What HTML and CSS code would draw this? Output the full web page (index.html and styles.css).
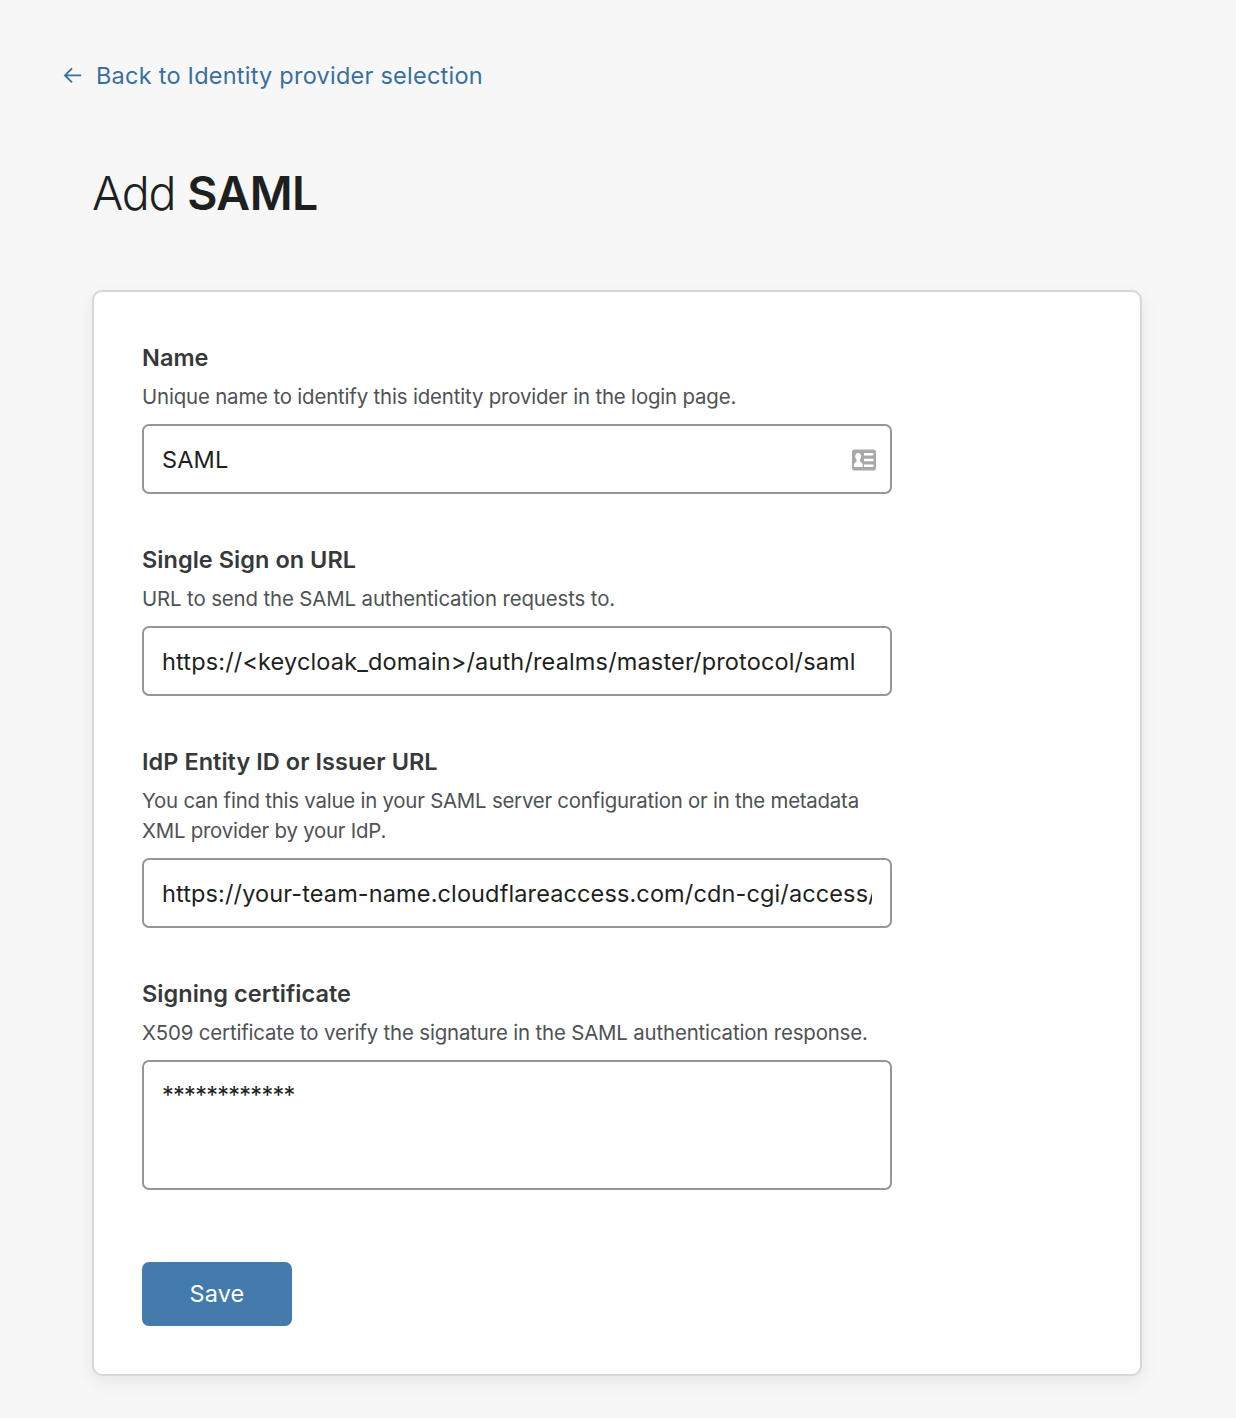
FILE: index.html
```html
<!DOCTYPE html>
<html lang="en">
<head>
<meta charset="utf-8">
<title>Add SAML</title>
<link rel="stylesheet" href="styles.css">
</head>
<body>
<main class="page">
  <a class="back" href="#">
    <svg class="back-icon" viewBox="0 0 20 18" fill="none" stroke="currentColor" stroke-width="1.9"><path d="M18.2 9.4H2.2M9 2.4 2 9.4l7 7"/></svg>
    <span class="back-text">Back to Identity provider selection</span>
  </a>
  <h1 class="title">Add <strong class="title-name">SAML</strong></h1>
  <form class="card">
    <div class="field">
      <label class="label label-name" for="name">Name</label>
      <p class="hint hint-name">Unique name to identify this identity provider in the login page.</p>
      <div class="control">
        <input class="input input-name" id="name" type="text" value="SAML">
        <svg class="contact-icon" viewBox="0 0 24 22"><rect width="24" height="21" y=".5" rx="2.8" fill="#a8a8a8"/><path fill="#fff" d="M12 4h9.5v2.6H12zM12 9.700h9.500v2.600H12zM12 15.400h9.500V18H12zM6.200 4c1.900 0 3 1.400 3 3.200 0 1.300-.5 2.500-1.300 3.200v2l2 1.600c.6.500.8 1 .8 2v2H2v-2c0-1 .2-1.500.8-2l1.800-1.600v-2C3.700 9.700 3.200 8.500 3.200 7.200 3.200 5.400 4.300 4 6.200 4z"/></svg>
      </div>
    </div>
    <div class="field">
      <label class="label label-sso" for="sso">Single Sign on URL</label>
      <p class="hint hint-sso">URL to send the SAML authentication requests to.</p>
      <input class="input input-sso" id="sso" type="text" value="https://&lt;keycloak_domain&gt;/auth/realms/master/protocol/saml">
    </div>
    <div class="field">
      <label class="label label-issuer" for="issuer">IdP Entity ID or Issuer URL</label>
      <p class="hint hint-issuer">You can find this value in your SAML server configuration or in the metadata<br>XML provider by your IdP.</p>
      <input class="input input-issuer" id="issuer" type="text" value="https://your-team-name.cloudflareaccess.com/cdn-cgi/access/callback">
    </div>
    <div class="field">
      <label class="label label-cert" for="cert">Signing certificate</label>
      <p class="hint hint-cert">X509 certificate to verify the signature in the SAML authentication response.</p>
      <textarea class="input textarea" id="cert">************</textarea>
    </div>
    <button class="save" type="button">Save</button>
  </form>
</main>
</body>
</html>
```

FILE: styles.css
```css
* { box-sizing: border-box; }
body {
  margin: 0;
  background: #f7f7f7;
  color: #1d1f20;
  font-family: Inter, "Liberation Sans", sans-serif;
}
.page { padding: 57px 94px 42px 92px; }
.back {
  display: flex;
  align-items: center;
  gap: 13px;
  width: max-content;
  height: 36px;
  margin-left: -29px;
  color: #376f9f;
  font-size: 23.500px;
  text-decoration: none;
}
.back-icon { width: 20px; height: 18px; }
.back-text { letter-spacing: 0.24px; white-space: nowrap; }
.title {
  margin: 70px 0 0;
  height: 60px;
  font-size: 46.500px;
  font-weight: 300;
  line-height: 60px;
  letter-spacing: -1.25px;
}
.title-name { font-weight: 600; letter-spacing: -0.55px; }
.card {
  display: flex;
  flex-direction: column;
  align-items: flex-start;
  margin-top: 67px;
  padding: 48px;
  border: 2px solid #d5d7d8;
  border-radius: 10px;
  background: #fff;
  box-shadow: 0 6px 18px rgba(0, 0, 0, 0.07);
}
.field {
  display: flex;
  flex-direction: column;
  width: 750px;
  margin-bottom: 48px;
}
.label {
  color: #36393a;
  font-size: 23.500px;
  font-weight: 600;
  line-height: 36px;
  letter-spacing: 0.04px;
}
.hint {
  margin: 6px 0 12px;
  color: #4e5255;
  font-size: 20.400px;
  line-height: 30px;
  letter-spacing: -0.16px;
  white-space: nowrap;
}
.hint-sso { letter-spacing: -0.12px; }
.hint-issuer { letter-spacing: -0.22px; }
.hint-cert { letter-spacing: -0.15px; }
.control { position: relative; display: flex; }
.input {
  display: block;
  width: 100%;
  height: 70px;
  margin: 0;
  padding: 0 18px;
  border: 2px solid #92979b;
  border-radius: 7px;
  outline: 0;
  background: #fff;
  color: #1d1f20;
  font-family: inherit;
  font-size: 23.500px;
  line-height: 36px;
  letter-spacing: 0.15px;
}
.input-issuer { letter-spacing: 0.12px; }
.contact-icon {
  position: absolute;
  top: 25px;
  right: 16px;
  width: 24px;
  height: 22px;
}
.textarea {
  height: 130px;
  padding-top: 15px;
  letter-spacing: -0.73px;
  resize: none;
  overflow: hidden;
}
.save {
  width: 150px;
  height: 64px;
  margin-top: 24px;
  padding: 0 0 2px;
  border: 0;
  border-radius: 7px;
  background: #437bac;
  color: #fff;
  font-family: inherit;
  font-size: 23.500px;
  letter-spacing: 0.1px;
}
```
